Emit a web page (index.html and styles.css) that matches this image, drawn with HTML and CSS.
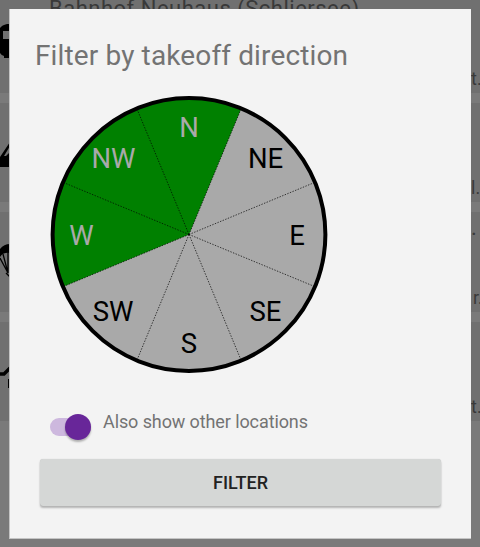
FILE: index.html
```html
<!DOCTYPE html>
<html lang="en">
<head>
<meta charset="utf-8">
<title>Filter by takeoff direction</title>
<link rel="stylesheet" href="styles.css">
</head>
<body>
<div class="screen">
  <div class="list">
    <div class="row row-first">
      <svg class="thumb" width="10" height="36" viewBox="0 0 10 36"><path d="M10 0H7Q2 1 0 4V29Q2 32 4 32V34H10Z"/><path d="M3 7H10V15H3Z" fill="#707070"/></svg>
      <div class="place">Bahnhof Neuhaus (Schliersee)</div>
      <div class="tail">t...</div>
    </div>
    <div class="row">
      <svg class="thumb thumb-tent" width="10" height="26" viewBox="0 0 10 26"><path d="M0 15L10 0V4L4 14H6L10 10V25H0Z"/></svg>
      <div class="tail">l...</div>
    </div>
    <div class="row">
      <svg class="thumb thumb-glider" width="10" height="36" viewBox="0 0 10 36"><path d="M0 6Q4 1 10 1V10Q3 9 0 14Z"/><path d="M0 15L8 30M3 11L8 30V9M6 30L10 34" fill="none" stroke="#000" stroke-width="1.3"/></svg>
      <div class="dot">.</div>
      <div class="tail tail-wide">r...</div>
    </div>
    <div class="row">
      <svg class="thumb thumb-hut" width="10" height="24" viewBox="0 0 10 24"><path d="M0 9H4L10 3" fill="none" stroke="#000" stroke-width="3.4"/><path d="M8 14H10V23H8Z"/></svg>
      <div class="tail">t...</div>
    </div>
  </div>
  <div class="dialog">
    <h1 class="title">Filter by takeoff direction</h1>
    <svg class="wheel" width="278" height="278" viewBox="-139 -139.5 278 278">
      <circle r="136.5" fill="#a9a9a9"/>
      <path d="M0 0L-126.11 52.24A136.5 136.5 0 0 1 52.24 -126.11Z" fill="#008000"/>
      <g class="spokes">
        <path d="M0 0L52.24 -126.11"/><path d="M0 0L126.11 -52.24"/>
        <path d="M0 0L126.11 52.24"/><path d="M0 0L52.24 126.11"/>
        <path d="M0 0L-52.24 126.11"/><path d="M0 0L-126.11 52.24"/>
        <path d="M0 0L-126.11 -52.24"/><path d="M0 0L-52.24 -126.11"/>
      </g>
      <circle class="rim" r="136.4"/>
      <g class="points">
        <text class="on" x="0" y="-97.5">N</text>
        <text x="76.5" y="-66.5">NE</text>
        <text x="108" y="10.5">E</text>
        <text x="76.5" y="86.5">SE</text>
        <text x="0" y="118.5">S</text>
        <text x="-76" y="86.5">SW</text>
        <text class="on" x="-107.5" y="10.5">W</text>
        <text class="on" x="-75.5" y="-66.5">NW</text>
      </g>
    </svg>
    <div class="option">
      <div class="switch"><div class="knob"></div></div>
      <span class="option-label">Also show other locations</span>
    </div>
    <button class="submit">FILTER</button>
  </div>
</div>
</body>
</html>
```
FILE: styles.css
```css
* { box-sizing: border-box; }
body { margin: 0; font-family: Roboto, sans-serif; }
.screen {
  position: relative;
  width: 480px;
  height: 547px;
  overflow: hidden;
  background: #7a7a7a;
}
.list { display: grid; grid-template-rows: 93px 99px 100px 99px; row-gap: 10px; }
.row {
  position: relative;
  overflow: hidden;
  background: #707070;
  color: #393939;
  white-space: nowrap;
}
.thumb { position: absolute; left: 0; top: 24px; }
.thumb-tent { top: 39px; }
.thumb-glider { top: 31px; }
.thumb-hut { top: 43px; }
.place { position: absolute; left: 49px; top: -4px; font-size: 22px; line-height: 26px; letter-spacing: 0.5px; }
.tail { position: absolute; left: 471px; bottom: 4px; font-size: 18px; line-height: 20px; }
.tail-wide { left: 473px; }
.dot { position: absolute; left: 471px; top: 3px; font-size: 22px; line-height: 26px; }
.dialog {
  position: absolute;
  left: 9px;
  top: 9px;
  width: 462px;
  height: 530px;
  padding: 30px 30px 0;
  background: #f3f3f3;
  border: solid #c4c4c4;
  border-width: 0 0 1px 1px;
}
.title {
  margin: 0 0 24px -5px;
  font-size: 28px;
  font-weight: 400;
  line-height: 33px;
  letter-spacing: 0.13px;
  color: #737373;
  white-space: nowrap;
}
.wheel { display: block; margin-left: 10px; margin-top: -1px; }
.spokes path { stroke: #000; stroke-width: 0.7; stroke-dasharray: 1.4 1.4; }
.rim { fill: none; stroke: #000; stroke-width: 4; }
.points { font-size: 27.5px; text-anchor: middle; fill: #000; }
.points .on { fill: #a9a9a9; }
.option { display: flex; margin: 37px 0 0 10px; height: 32px; }
.switch {
  display: flex;
  justify-content: flex-end;
  align-items: center;
  width: 40.5px;
  height: 18px;
  margin-top: 8px;
  border-radius: 9px;
  background: #cdb8de;
}
.knob {
  flex: none;
  width: 26px;
  height: 26px;
  border-radius: 50%;
  background: #682699;
  box-shadow: 0 2px 2px rgba(0, 0, 0, 0.28);
}
.option-label { margin-left: 12.5px; font-size: 18px; line-height: 24px; letter-spacing: -0.1px; color: #737373; white-space: nowrap; }
.submit {
  display: block;
  width: 401px;
  height: 47px;
  margin-top: 16.5px;
  padding: 1px 0 0;
  border: 0;
  border-radius: 3px;
  background: #d5d7d6;
  box-shadow: 0 2px 2px rgba(0, 0, 0, 0.25), 0 0 1px rgba(0, 0, 0, 0.2);
  font: 500 18px/46px Roboto, sans-serif;
  color: #222;
}
```
